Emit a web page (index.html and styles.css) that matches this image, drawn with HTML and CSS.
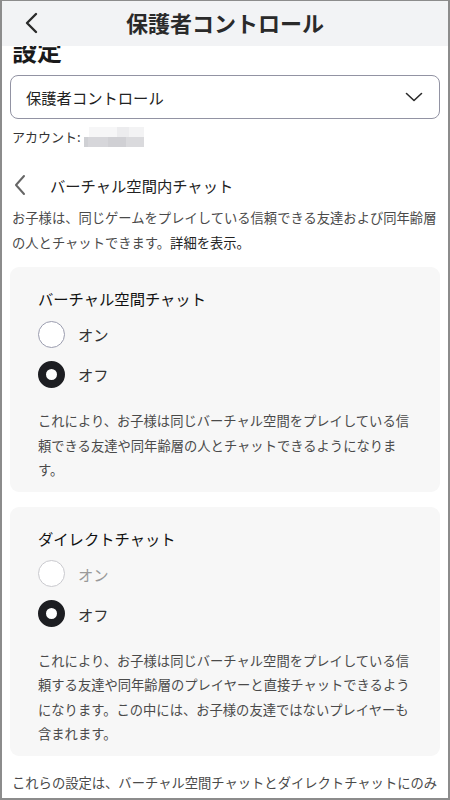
FILE: index.html
```html
<!DOCTYPE html>
<html lang="ja">
<head>
<meta charset="utf-8">
<title>保護者コントロール</title>
<link rel="stylesheet" href="styles.css">
</head>
<body>
<div class="frame">
  <header class="topbar">
    <span class="topbar-back">
      <svg width="16" height="22" viewBox="0 0 16 22"><path d="M12 2 L3 11 L12 20" fill="none" stroke="#2a2a2a" stroke-width="2.4" stroke-linecap="round" stroke-linejoin="round"/></svg>
    </span>
    <h1 class="topbar-title">保護者コントロール</h1>
  </header>
  <main class="content">
    <h2 class="page-heading">設定</h2>
    <div class="select">
      <span class="select-label">保護者コントロール</span>
      <svg class="select-chevron" width="18" height="10" viewBox="0 0 18 10"><path d="M1.5 1.5 L9 8.5 L16.5 1.5" fill="none" stroke="#2a2a2a" stroke-width="1.6" stroke-linecap="round" stroke-linejoin="round"/></svg>
    </div>
    <div class="account">アカウント: <span class="account-blur"><span class="blur-a"></span><span class="blur-b"></span></span></div>
    <div class="section-head">
      <svg class="section-back" width="14" height="22" viewBox="0 0 14 22"><path d="M11 2 L3 11 L11 20" fill="none" stroke="#666" stroke-width="2" stroke-linecap="round" stroke-linejoin="round"/></svg>
      <span class="section-title">バーチャル空間内チャット</span>
    </div>
    <p class="intro">お子様は、同じゲームをプレイしている信頼できる友達および同年齢層の人とチャットできます。<span class="link">詳細を表示。</span></p>

    <section class="card">
      <h3 class="card-title">バーチャル空間チャット</h3>
      <div class="radio-row"><span class="radio"></span><span class="radio-label">オン</span></div>
      <div class="radio-row"><span class="radio checked"></span><span class="radio-label">オフ</span></div>
      <p class="card-desc">これにより、お子様は同じバーチャル空間をプレイしている信頼できる友達や同年齢層の人とチャットできるようになります。</p>
    </section>

    <section class="card">
      <h3 class="card-title">ダイレクトチャット</h3>
      <div class="radio-row disabled"><span class="radio"></span><span class="radio-label">オン</span></div>
      <div class="radio-row"><span class="radio checked"></span><span class="radio-label">オフ</span></div>
      <p class="card-desc">これにより、お子様は同じバーチャル空間をプレイしている信頼する友達や同年齢層のプレイヤーと直接チャットできるようになります。この中には、お子様の友達ではないプレイヤーも含まれます。</p>
    </section>

    <p class="footer-note">これらの設定は、バーチャル空間チャットとダイレクトチャットにのみ適用され、ゲームのクリエーターが追加したチャット機能には適用されません。</p>
  </main>
</div>
</body>
</html>
```
FILE: styles.css
```css
* { box-sizing: border-box; }
html, body { margin: 0; padding: 0; background: #fff; }
body {
  font-family: "Noto Sans CJK JP", "Noto Sans", sans-serif;
  color: #222;
}
.frame {
  width: 450px;
  height: 800px;
  border-style: solid;
  border-color: #8c8c8c;
  border-width: 1px 2px 2px 2px;
  overflow: hidden;
  position: relative;
  background: #fff;
}
.topbar {
  position: absolute;
  top: 0; left: 0; right: 0;
  height: 45px;
  background: #f2f3f5;
  display: flex;
  align-items: center;
  justify-content: center;
  padding-bottom: 4px;
  z-index: 2;
}
.topbar-back {
  position: absolute;
  left: 22px;
  top: 11px;
  display: flex;
}
.topbar-title {
  margin: 0;
  font-size: 22px;
  font-weight: 700;
  color: #2a2a2a;
  line-height: 1;
}
.content {
  padding: 34px 8px 0 8px;
}
.page-heading {
  margin: 0 0 0 2px;
  font-size: 25px;
  font-weight: 700;
  line-height: 30px;
  color: #1a1a1a;
}
.select {
  margin-top: 10px;
  height: 44px;
  border: 1px solid #9293a3;
  border-radius: 8px;
  display: flex;
  align-items: center;
  justify-content: space-between;
  padding: 0 16px 0 15px;
}
.select-label {
  font-size: 15.3px;
  color: #222;
}
.account {
  margin: 6px 0 0 2px;
  font-size: 13px;
  line-height: 24px;
  color: #333;
  display: flex;
  align-items: center;
}
.account-blur {
  display: inline-flex;
  flex-direction: column;
  width: 60px;
  height: 20px;
  margin-left: 3px;
}
.blur-a {
  height: 10px;
  background: linear-gradient(90deg, #fff 0 8%, #f6f6f7 8% 55%, #ececee 55% 75%, #f3f3f4 75%);
}
.blur-b {
  height: 10px;
  background: linear-gradient(90deg, #cfd0d4 0 6%, #d6d6da 6% 40%, #d0d0d4 40% 70%, #dadadd 70%);
}
.section-head {
  margin-top: 24px;
  display: flex;
  align-items: center;
  height: 24px;
  padding-left: 3px;
}
.section-back { display: block; }
.section-title {
  margin-left: 23px;
  font-size: 15.3px;
  color: #222;
}
.intro {
  margin: 9px 0 12px 2px;
  font-size: 13.3px;
  line-height: 24.5px;
  color: #4a4a4a;
}
.link { color: #222; }
.card {
  background: #f7f7f7;
  border-radius: 9px;
  padding: 20px 28px 9px 28px;
  margin-bottom: 15px;
}
.card-title {
  margin: 0;
  font-size: 15.3px;
  font-weight: 400;
  line-height: 22px;
  color: #111;
}
.radio-row {
  display: flex;
  align-items: center;
  height: 40px;
}
.card-title + .radio-row { margin-top: 5px; }
.radio {
  width: 27px;
  height: 27px;
  border-radius: 50%;
  border: 1.5px solid #9a9cae;
  background: #fff;
  flex: none;
}
.radio.checked {
  border: 8px solid #1d1e22;
}
.radio-label {
  margin-left: 13px;
  font-size: 15.3px;
  color: #333;
}
.disabled .radio { border-color: #c9c9ce; }
.disabled .radio-label { color: #9a9a9a; }
.card-desc {
  margin: 15px 0 0 0;
  font-size: 13.3px;
  line-height: 24.5px;
  color: #4a4a4a;
}
.footer-note {
  margin: 12px 0 0 2px;
  font-size: 13.3px;
  line-height: 24.5px;
  color: #4a4a4a;
}
```
